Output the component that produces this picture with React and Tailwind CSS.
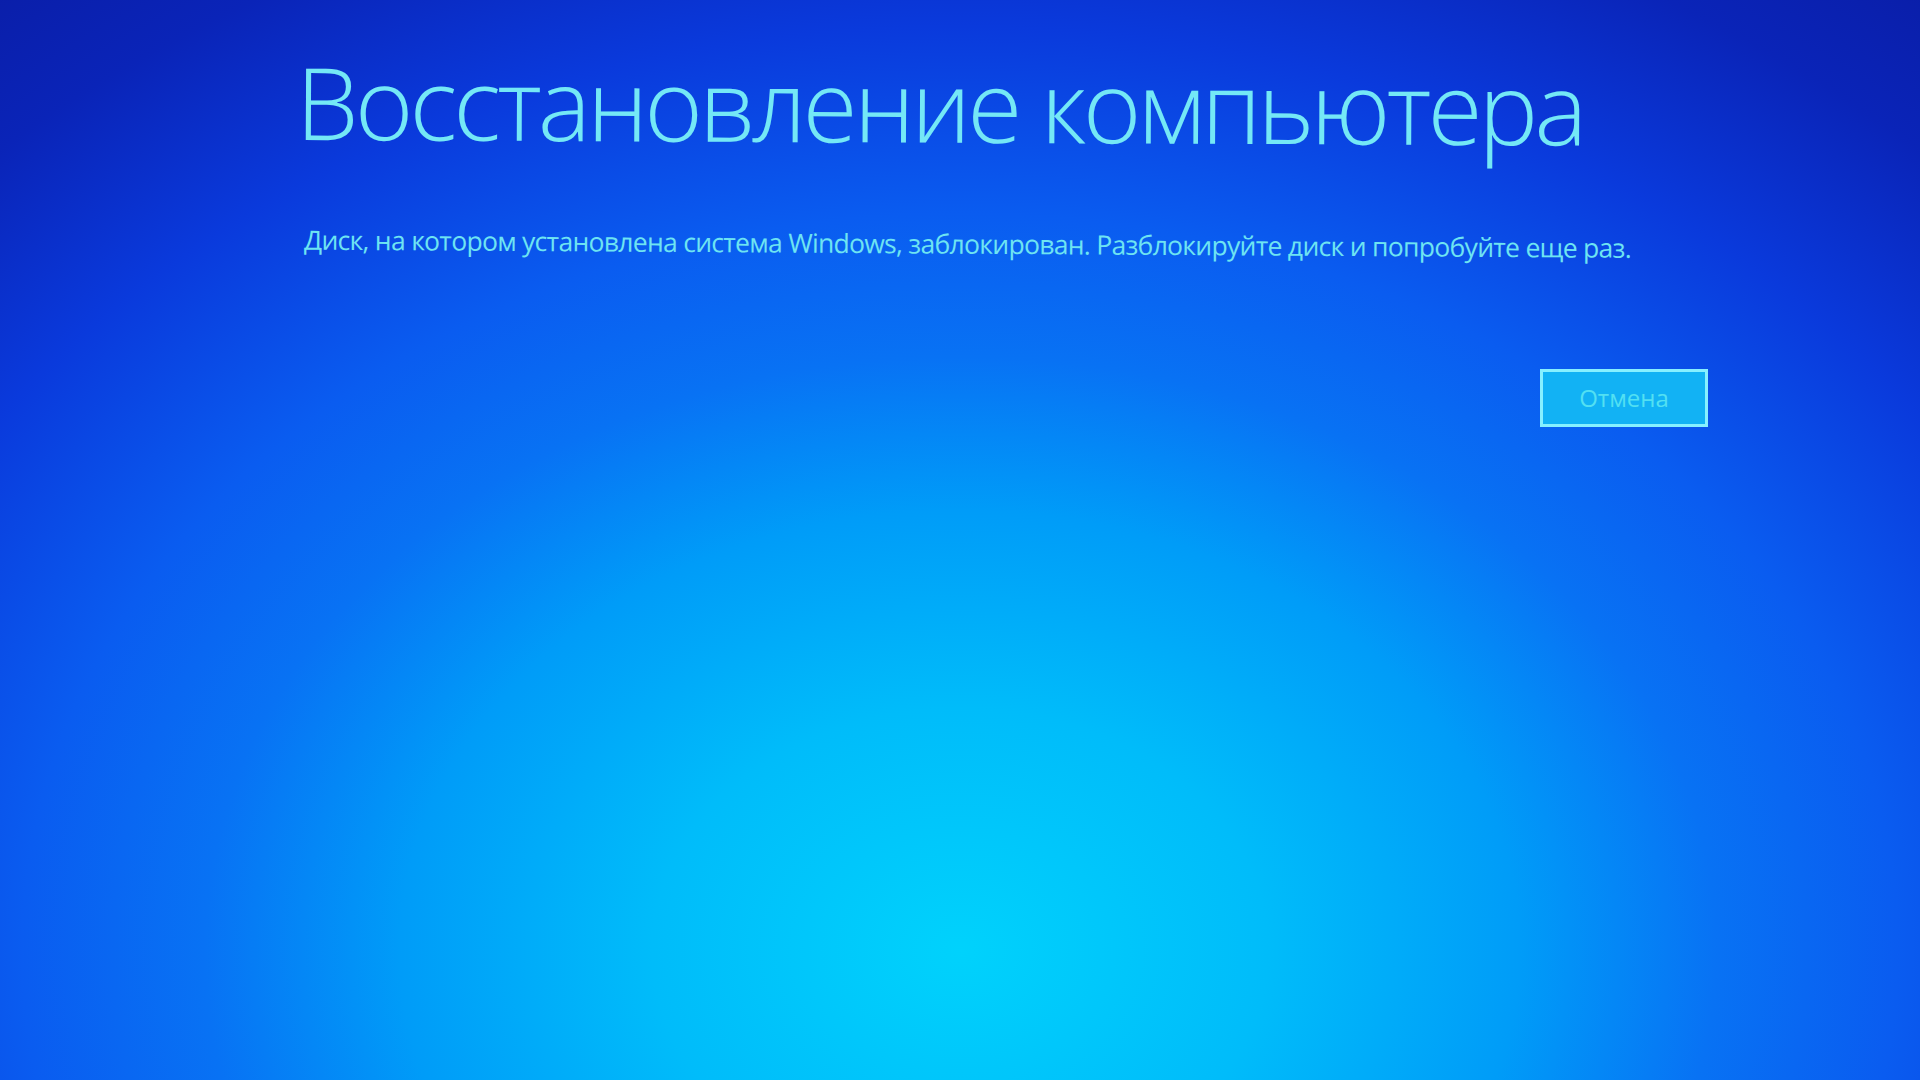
export default function App() {
  return (
    <div className="relative h-screen w-full overflow-hidden bg-[#0a2ad0] bg-[radial-gradient(ellipse_1400px_1100px_at_50%_88%,#00d2fc_0%,#00bcfa_22%,#009cf8_40%,#0872f4_54%,#0a5cf0_67%,#0a3adc_84%,#0a24b8_100%,#0a1ca4_115%)] font-['Open_Sans','Noto_Sans',sans-serif]">
      <div className="flex flex-col pl-[296px] pr-[212px] pt-[54px]">
        <h1 className="rotate-[0.25deg] whitespace-nowrap text-[100px] font-light leading-none tracking-[-3.8px] text-[#74e8f6]">
          Восстановление компьютера
        </h1>
        <p className="mt-[77px] ml-[8px] rotate-[0.35deg] whitespace-nowrap text-[26.5px] leading-none tracking-[-0.7px] text-[#6ee4f2]">
          Диск, на котором установлена система Windows, заблокирован. Разблокируйте диск и попробуйте еще раз.
        </p>
        <div className="mt-[111px] flex justify-end">
          <button
            type="button"
            className="h-[58px] w-[168px] border-[3px] border-[#86f0ff] bg-[#12b2f4] text-[24px] text-[#52e0f2]"
          >
            Отмена
          </button>
        </div>
      </div>
    </div>
  )
}
